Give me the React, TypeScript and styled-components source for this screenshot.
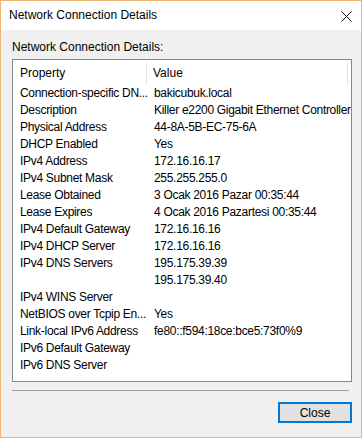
import React from 'react';
import styled, { createGlobalStyle } from 'styled-components';

const GlobalStyle = createGlobalStyle`
  html, body {
    margin: 0;
    padding: 0;
    background: #ffffff;
  }
  * {
    box-sizing: border-box;
  }
`;

const details: [string, string][] = [
  ['Connection-specific DN...', 'bakicubuk.local'],
  ['Description', 'Killer e2200 Gigabit Ethernet Controller'],
  ['Physical Address', '44-8A-5B-EC-75-6A'],
  ['DHCP Enabled', 'Yes'],
  ['IPv4 Address', '172.16.16.17'],
  ['IPv4 Subnet Mask', '255.255.255.0'],
  ['Lease Obtained', '3 Ocak 2016 Pazar 00:35:44'],
  ['Lease Expires', '4 Ocak 2016 Pazartesi 00:35:44'],
  ['IPv4 Default Gateway', '172.16.16.16'],
  ['IPv4 DHCP Server', '172.16.16.16'],
  ['IPv4 DNS Servers', '195.175.39.39'],
  ['', '195.175.39.40'],
  ['IPv4 WINS Server', ''],
  ['NetBIOS over Tcpip En...', 'Yes'],
  ['Link-local IPv6 Address', 'fe80::f594:18ce:bce5:73f0%9'],
  ['IPv6 Default Gateway', ''],
  ['IPv6 DNS Server', ''],
];

const App = () => {
  return (
    <>
      <GlobalStyle />
      <Window>
        <TitleBar>
          <Title>Network Connection Details</Title>
          <CloseX viewBox='0 0 11 11' aria-label='Close window'>
            <path d='M0.5 0.5 L10.5 10.5 M10.5 0.5 L0.5 10.5' />
          </CloseX>
        </TitleBar>
        <Body>
          <Caption>Network Connection Details:</Caption>
          <ListBox>
            <HeaderRow>
              <HeaderCell width={134}>Property</HeaderCell>
              <HeaderCell width={201}>Value</HeaderCell>
            </HeaderRow>
            {details.map(([name, value], i) => (
              <Row key={i}>
                <NameCell>{name}</NameCell>
                <ValueCell>{value}</ValueCell>
              </Row>
            ))}
          </ListBox>
          <Divider />
          <Footer>
            <Button>Close</Button>
          </Footer>
        </Body>
      </Window>
    </>
  );
};

export default App;

const Window = styled.div`
  display: flex;
  flex-direction: column;
  width: 362px;
  height: 438px;
  border: 1px solid #eeb577;
  background: #f0f0f0;
  font-family: 'Liberation Sans', Arial, sans-serif;
  font-size: 12px;
  color: #000000;
`;

const TitleBar = styled.div`
  display: flex;
  align-items: center;
  justify-content: space-between;
  height: 29px;
  padding: 0 9px 1px 8px;
  background: #ffffff;
`;

const Title = styled.span`
  font-size: 12px;
  color: #000000;
`;

const CloseX = styled.svg`
  width: 11px;
  height: 11px;
  margin-top: 2px;
  stroke: #111111;
  stroke-width: 1;
  fill: none;
`;

const Body = styled.div`
  display: flex;
  flex-direction: column;
  flex: 1;
  padding: 10px 9px 0 11px;
`;

const Caption = styled.div`
  height: 15px;
  line-height: 15px;
  margin-bottom: 4px;
`;

const ListBox = styled.div`
  display: flex;
  flex-direction: column;
  height: 323px;
  border: 1px solid #828790;
  background: #ffffff;
  overflow: hidden;
`;

const HeaderRow = styled.div`
  display: flex;
  height: 25px;
  flex-shrink: 0;
`;

const HeaderCell = styled.div<{ width: number }>`
  width: ${({ width }) => width}px;
  flex-shrink: 0;
  padding: 4px 0 0 7px;
  line-height: 15px;
  border-right: 1px solid #e5e5e5;
  margin: 2px 0 0;

  & + & {
    padding-left: 6px;
  }
`;

const Row = styled.div`
  display: flex;
  height: 17px;
  line-height: 17px;
  flex-shrink: 0;
  white-space: nowrap;
  letter-spacing: -0.3px;
`;

const NameCell = styled.div`
  width: 135px;
  flex-shrink: 0;
  padding-left: 7px;
`;

const ValueCell = styled.div`
  flex-shrink: 0;
  padding-left: 6px;
`;

const Divider = styled.div`
  height: 1px;
  width: 337px;
  margin-top: 8px;
  background: #a0a0a0;
`;

const Footer = styled.div`
  display: flex;
  justify-content: flex-end;
  margin-top: 11px;
`;

const Button = styled.button`
  width: 74px;
  height: 21px;
  padding: 0;
  border: 2px solid #0078d7;
  background: #e1e1e1;
  font-family: 'Liberation Sans', Arial, sans-serif;
  font-size: 12px;
  color: #000000;
`;
